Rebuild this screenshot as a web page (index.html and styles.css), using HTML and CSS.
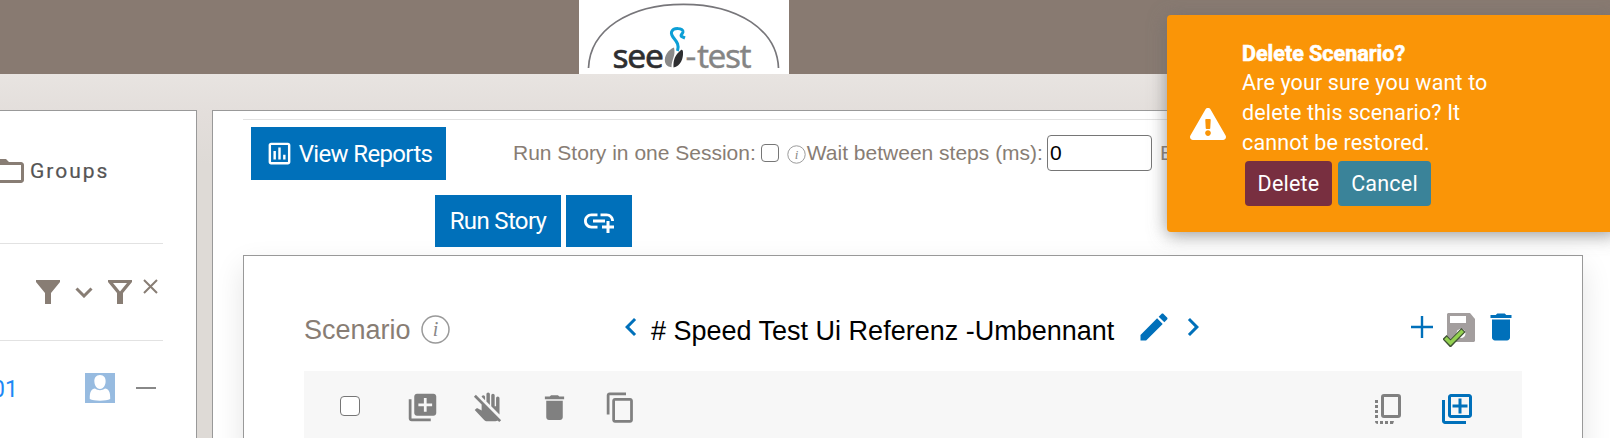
FILE: index.html
```html
<!DOCTYPE html>
<html lang="en">
<head>
<meta charset="utf-8">
<title>Seed-Test</title>
<link rel="stylesheet" href="styles.css">
</head>
<body>
<header class="topbar">
  <svg class="logo" width="210" height="74" viewBox="0 0 210 74">
    <path d="M9.5 68C11 30 50 4.3 104.500 4.300S198 30 199.500 68" fill="none" stroke="#77767a" stroke-width="1.7"/>
    <text class="logo-dark" x="33.500" y="67.500">see</text>
    <path d="M95 47.500C89 50 85 56 86 62c1 4 4 5 6.500 5.200 0-8 4.500-11 2.500-19.700z" fill="#8a8a8a"/>
    <path d="M102 50c-6 5-8 10-7.500 17.500 7-1 10-9 9.500-15.500-.3-2-1-2.500-2-2z" fill="#2e2e30"/>
    <path d="M98.500 51C102 41 91 38 92.500 32c2-5 12-4 11.500 0-.500 2-3 3-1.500 4.500l3.500 1.500" fill="none" stroke="#0c9fd6" stroke-width="3"/>
    <text class="logo-light" x="106.500" y="67.500">-<tspan x="118">test</tspan></text>
  </svg>
</header>
<main class="layout">
  <aside class="sidebar">
    <div class="groups">
      <svg class="folder" width="36" height="36" viewBox="0 0 24 24"><path d="M20 6h-8l-2-2H4c-1.100 0-1.990.9-1.990 2L2 18c0 1.100.9 2 2 2h16c1.100 0 2-.9 2-2V8c0-1.100-.9-2-2-2zm0 12H4V8h16v10z"/></svg>
      <span>Groups</span>
    </div>
    <div class="filters">
      <svg width="24" height="24" viewBox="0 0 24 24"><path d="M0 0h24v2l-9 11v11H9V13L0 2z"/></svg>
      <svg class="chev" width="18" height="11" viewBox="0 0 18 11"><path d="M1.500 1.500 9 9l7.500-7.500" fill="none" stroke="currentColor" stroke-width="3"/></svg>
      <svg class="outline-filter" width="24" height="24" viewBox="0 0 24 24"><path fill-rule="evenodd" d="M0 0h24v2l-9 11v11H9V13L0 2zM5 3l7 8.500L19 3z"/></svg>
      <svg class="clear" width="15" height="15" viewBox="0 0 15 15"><path d="m1 1 13 13M14 1 1 14" fill="none" stroke="currentColor" stroke-width="2"/></svg>
    </div>
    <div class="story">
      <span class="story-id">01</span>
      <svg class="avatar" width="30" height="30" viewBox="0 0 30 30"><path fill="#97bbe0" d="M0 0h30v30H0z"/><path fill="#fff" d="M15 2c4 0 6 3 5.600 7-.3 4-2.600 7-5.600 7s-5.300-3-5.600-7C9 5 11 2 15 2zM10 15.500c3 2.300 7 2.300 10 0 3.500.5 5.500 3 5.200 10.500-4 2.300-16.400 2.300-20.400 0-.3-7.500 1.700-10 5.200-10.500z"/></svg>
      <i class="dash"></i>
    </div>
  </aside>
  <section class="panel">
    <div class="controls">
      <button class="btn reports"><svg width="29" height="29" viewBox="0 0 24 24"><path d="M9 17H7v-7h2v7zm4 0h-2V7h2v10zm4 0h-2v-4h2v4zm2 2H5V5h14v14zm0-16H5c-1.100 0-2 .9-2 2v14c0 1.100.9 2 2 2h14c1.100 0 2-.9 2-2V5c0-1.100-.9-2-2-2z"/></svg><span>View Reports</span></button>
      <div class="options">
        <span>Run Story in one Session:</span>
        <i class="check small"></i>
        <svg class="info" width="19" height="19" viewBox="0 0 29 29"><circle cx="14.500" cy="14.500" r="13.300"/><text x="14.500" y="21">i</text></svg>
        <span>Wait between steps (ms):</span>
        <span class="wait">0</span>
        <span class="browser">Browser</span>
      </div>
    </div>
    <div class="run-row">
      <button class="btn run">Run Story</button>
      <button class="btn link"><svg width="36" height="36" viewBox="0 0 24 24"><path d="M8 11h8v2H8zm12.100 1H22c0-2.760-2.240-5-5-5h-4v1.900h4c1.710 0 3.100 1.390 3.100 3.100zM3.900 12c0-1.710 1.390-3.100 3.100-3.100h4V7H7c-2.760 0-5 2.240-5 5s2.240 5 5 5h4v-1.900H7c-1.710 0-3.100-1.390-3.100-3.100zM19 12h-2v3h-3v2h3v3h2v-3h3v-2h-3z"/></svg></button>
    </div>
    <div class="card">
      <div class="card-head">
        <span class="label">Scenario</span>
        <svg class="info big" width="29" height="29" viewBox="0 0 29 29"><circle cx="14.500" cy="14.500" r="13.500"/><text x="14.500" y="21">i</text></svg>
        <svg class="ic prev" viewBox="0 0 24 24"><path d="M15.410 7.410 14 6l-6 6 6 6 1.410-1.410L10.830 12z"/></svg>
        <span class="title"># Speed Test Ui Referenz -Umbennant</span>
        <svg class="ic edit" viewBox="0 0 24 24"><path d="M3 17.250V21h3.750L17.810 9.940l-3.750-3.750L3 17.250zM20.710 7.040c.39-.39.39-1.020 0-1.410l-2.340-2.340c-.39-.39-1.020-.39-1.410 0l-1.830 1.830 3.750 3.750 1.830-1.830z"/></svg>
        <svg class="ic next" viewBox="0 0 24 24"><path d="M10 6 8.590 7.410 13.170 12l-4.580 4.590L10 18l6-6z"/></svg>
        <svg class="plus" width="22" height="22" viewBox="0 0 22 22"><path d="M11 0v22M0 11h22" stroke="currentColor" stroke-width="2.400"/></svg>
        <svg class="save" width="33" height="34" viewBox="0 0 33 34"><path fill="#a39e9e" d="M5 0h22l5 6v22l-1 1H5l-1-1V1z"/><path fill="#fff" d="M7 3h16v7H7z"/><circle cx="18" cy="20.500" r="4.500" fill="#fff"/><path d="m1.500 24 6 6.500L20.500 17" fill="none" stroke="#3f5233" stroke-width="5.800"/><path d="m2.500 25 5 5L19.700 17.800" fill="none" stroke="#93d151" stroke-width="3.600"/></svg>
        <svg class="ic trash" viewBox="0 0 24 24"><path d="M6 19c0 1.100.9 2 2 2h8c1.100 0 2-.9 2-2V7H6v12zM19 4h-3.500l-1-1h-5l-1 1H5v2h14V4z"/></svg>
      </div>
      <div class="toolbar">
        <i class="check"></i>
        <svg viewBox="0 0 24 24"><path d="M4 6H2v14c0 1.100.9 2 2 2h14v-2H4V6zm16-4H8c-1.100 0-2 .9-2 2v12c0 1.100.9 2 2 2h12c1.100 0 2-.9 2-2V4c0-1.100-.9-2-2-2zm-1 9h-4v4h-2v-4H9V9h4V5h2v4h4v2z"/></svg>
        <svg viewBox="0 0 24 24"><path d="M13 10.170l-2.500-2.500V2.250C10.500 1.560 11.060 1 11.750 1S13 1.560 13 2.250v7.920zM20 12.750V5.250C20 4.560 19.440 4 18.750 4S17.500 4.560 17.500 5.250V11h-1V3.250C16.500 2.560 15.940 2 15.250 2S14 2.560 14 3.250v7.920l6 6v-4.420zM9.500 4.250C9.500 3.560 8.940 3 8.250 3c-.67 0-1.200.53-1.240 1.180L9.500 6.670V4.250zM2.810 2.810 1.390 4.220l5.630 5.630L7 9.830v4.300c-1.110-.64-2.580-1.470-2.600-1.480-.17-.09-.34-.14-.54-.14-.26 0-.5.09-.7.26C3.120 12.780 2 13.880 2 13.880l6.800 7.180c.57.6 1.350.94 2.180.94H17c.62 0 1.180-.19 1.650-.52l-.02-.02 1.150 1.150 1.410-1.410L2.810 2.810z"/></svg>
        <svg viewBox="0 0 24 24"><path d="M6 19c0 1.100.9 2 2 2h8c1.100 0 2-.9 2-2V7H6v12zM19 4h-3.500l-1-1h-5l-1 1H5v2h14V4z"/></svg>
        <svg viewBox="0 0 24 24"><path d="M16 1H4c-1.100 0-2 .9-2 2v14h2V3h12V1zm3 4H8c-1.100 0-2 .9-2 2v14c0 1.100.9 2 2 2h11c1.100 0 2-.9 2-2V7c0-1.100-.9-2-2-2zm0 16H8V7h11v14z"/></svg>
        <svg class="flip" viewBox="0 0 26 30"><rect x="7.500" y="1.500" width="17" height="21" rx="1.500" fill="none" stroke="currentColor" stroke-width="3"/><path d="M0 6h3v3H0zM0 11h3v3H0zM0 16h3v3H0zM0 21h3v3H0zM0 27h3v3C1 30 0 29 0 27zM5 27h3v3H5zM10 27h3v3h-3zM15 27h4l-1 3h-3z"/></svg>
        <svg class="add" viewBox="0 0 24 24"><path d="M4 6H2v14c0 1.100.9 2 2 2h14v-2H4V6zm16-4H8c-1.100 0-2 .9-2 2v12c0 1.100.9 2 2 2h12c1.100 0 2-.9 2-2V4c0-1.100-.9-2-2-2zm0 14H8V4h12v12zm-7-1h2v-4h4V9h-4V5h-2v4H9v2h4z"/></svg>
      </div>
    </div>
  </section>
</main>
<div class="toast">
  <svg class="warn" width="36" height="32" viewBox="0 0 576 512"><path d="M569.517 440.013C587.975 472.007 564.806 512 527.940 512H48.054c-36.937 0-59.999-40.055-41.577-71.987L246.423 23.985c18.467-32.009 64.720-31.951 83.154 0l239.940 416.028zM288 354c-25.405 0-46 20.595-46 46s20.595 46 46 46 46-20.595 46-46-20.595-46-46-46zm-43.673-165.346l7.418 136c.347 6.364 5.609 11.346 11.982 11.346h48.546c6.373 0 11.635-4.982 11.982-11.346l7.418-136c.375-6.874-5.098-12.654-11.982-12.654h-63.383c-6.884 0-12.356 5.780-11.981 12.654z"/></svg>
  <div class="toast-body">
    <strong>Delete Scenario?</strong>
    <p>Are your sure you want to<br>delete this scenario? It<br>cannot be restored.</p>
    <div class="toast-actions"><button class="del">Delete</button><button class="cancel">Cancel</button></div>
  </div>
</div>
</body>
</html>
```
FILE: styles.css
```css
* { box-sizing: border-box; }
body { margin: 0; height: 438px; overflow: hidden; background: #e6e1de; font-family: "Liberation Sans", Arial, sans-serif; color: #887d74; }
svg { display: block; flex: none; fill: currentColor; }
button { border: 0; padding: 0; font-family: Roboto, sans-serif; color: #fff; }
span { white-space: nowrap; }

.topbar { height: 74px; background: #887a71; padding-left: 579px; }
.logo { background: #fff; }
.logo text { font-family: "Noto Sans", sans-serif; font-size: 33.500px; }
.logo .logo-dark { fill: #2e2e30; stroke: #2e2e30; stroke-width: .6; letter-spacing: -1.2px; }
.logo .logo-light { fill: #858585; stroke: #858585; stroke-width: .3; letter-spacing: -1.5px; }

.layout { display: flex; gap: 15px; height: 364px; padding-top: 36px; background: linear-gradient(#e8e4e1, #e3dedb 40px, #dedad6 90px); }

.sidebar { flex: none; width: 197px; background: #fff; border: solid #999; border-width: 1px 1px 0 0; }
.groups { display: flex; align-items: center; height: 133px; width: 163px; border-bottom: 1px solid #e2e2e2; padding-bottom: 18px; }
.folder { margin: 5px 3px 0 -9px; }
.groups span { font: 400 21px Roboto, sans-serif; letter-spacing: 2px; color: #555; padding: 5px 0 0; -webkit-text-stroke: .2px #555; }
.filters { display: flex; align-items: flex-start; height: 97px; width: 163px; border-bottom: 1px solid #e2e2e2; padding: 36px 0 0 36px; }
.filters .chev { margin: 7px 0 0 15px; }
.outline-filter { margin-left: 15px; }
.clear { margin: -1px 0 0 11px; }
.story { display: flex; align-items: center; padding-top: 31px; }
.story-id { width: 93px; margin-left: -8px; font: 23px Roboto, sans-serif; color: #1e88f5; padding-top: 4px; }
.dash { width: 20px; height: 2px; margin-left: 21px; background: #888; }

.panel { flex: none; width: 1420px; background: #fff; border: solid #999; border-width: 1px 0 0 1px; padding: 8px 0 0 30px; }
.controls { display: flex; align-items: flex-start; width: 1340px; height: 76px; border-top: 1px solid #e2e2e2; padding: 7px 0 0 8px; }
.btn { display: flex; align-items: center; justify-content: center; background: #0070ba; font-size: 24px; letter-spacing: -.65px; }
.reports { width: 195px; height: 53px; gap: 5px; }
.options { display: flex; align-items: center; height: 52px; margin-left: 67px; font-size: 21px; }
.check { flex: none; width: 20px; height: 20px; border: 1.500px solid #767676; border-radius: 4px; background: #fff; }
.check.small { width: 18px; height: 18px; margin: 0 8px 0 5px; }
.info circle { fill: none; stroke: #999; stroke-width: 1.500; }
.info text { font: italic 20px "Liberation Serif", serif; fill: #888; text-anchor: middle; }
.options .info { margin: 3px 1px 0 0; }
.wait { width: 105px; height: 36px; margin: 0 8px 0 4px; border: 1px solid #767676; border-radius: 4px; background: #fff; color: #000; padding: 5px 2px; line-height: 24px; }
.run-row { display: flex; gap: 5px; padding-left: 192px; height: 60px; }
.run { width: 126px; height: 52px; }
.link { width: 66px; height: 52px; }

.card { width: 1340px; height: 200px; border: 1px solid #999; background: #fff; box-shadow: 0 12px 28px rgba(0, 0, 0, .11); padding: 0 60px; }
.card-head { display: flex; align-items: center; height: 115px; padding-top: 27px; font-size: 27px; }
.label { width: 106px; padding-top: 6px; }
.info.big { margin: 4px 0 0 11px; }
.ic { width: 36px; height: 36px; color: #0070ba; }
.prev { margin-left: 163px; }
.title { width: 464px; margin-left: 2px; padding-top: 8px; color: #000; }
.edit { margin-left: 21px; }
.next { margin-left: 3px; }
.plus { margin-left: 200px; color: #0070ba; }
.save { margin: 6px 0 0 10px; }
.trash { margin-left: 7px; }
.toolbar { display: flex; align-items: flex-start; height: 84px; padding: 20px 0 0 36px; background: #f7f7f7; color: #808080; }
.toolbar svg { width: 33px; height: 33px; margin-right: 33px; }
.toolbar .check { margin: 5px 46px 0 0; }
.toolbar .flip { width: 26px; height: 30px; margin: 3px 38px 0 705px; }
.toolbar .add { width: 36px; height: 36px; color: #0070ba; margin: 0; }

.toast { position: absolute; left: 1167px; top: 15px; width: 450px; height: 217px; display: flex; background: #fa9507; color: #fff; border-radius: 4px; box-shadow: 0 3px 18px rgba(110, 110, 110, .7); font: 21.500px/30px Roboto, sans-serif; }
.warn { margin: 93px 16px 0 23px; }
.toast-body { padding-top: 23px; }
.toast strong { display: block; font-weight: 700; padding-top: 1px; margin-bottom: -1px; -webkit-text-stroke: .6px #fff; }
.toast p { margin: 0; letter-spacing: .14px; }
.toast-actions { display: flex; gap: 6px; padding: 3px 0 0 3px; }
.toast-actions button { height: 45px; border-radius: 4px; font-size: 21.500px; letter-spacing: .2px; }
.del { width: 87px; background: #782f40; }
.cancel { width: 93px; background: #3a8399; }
```
